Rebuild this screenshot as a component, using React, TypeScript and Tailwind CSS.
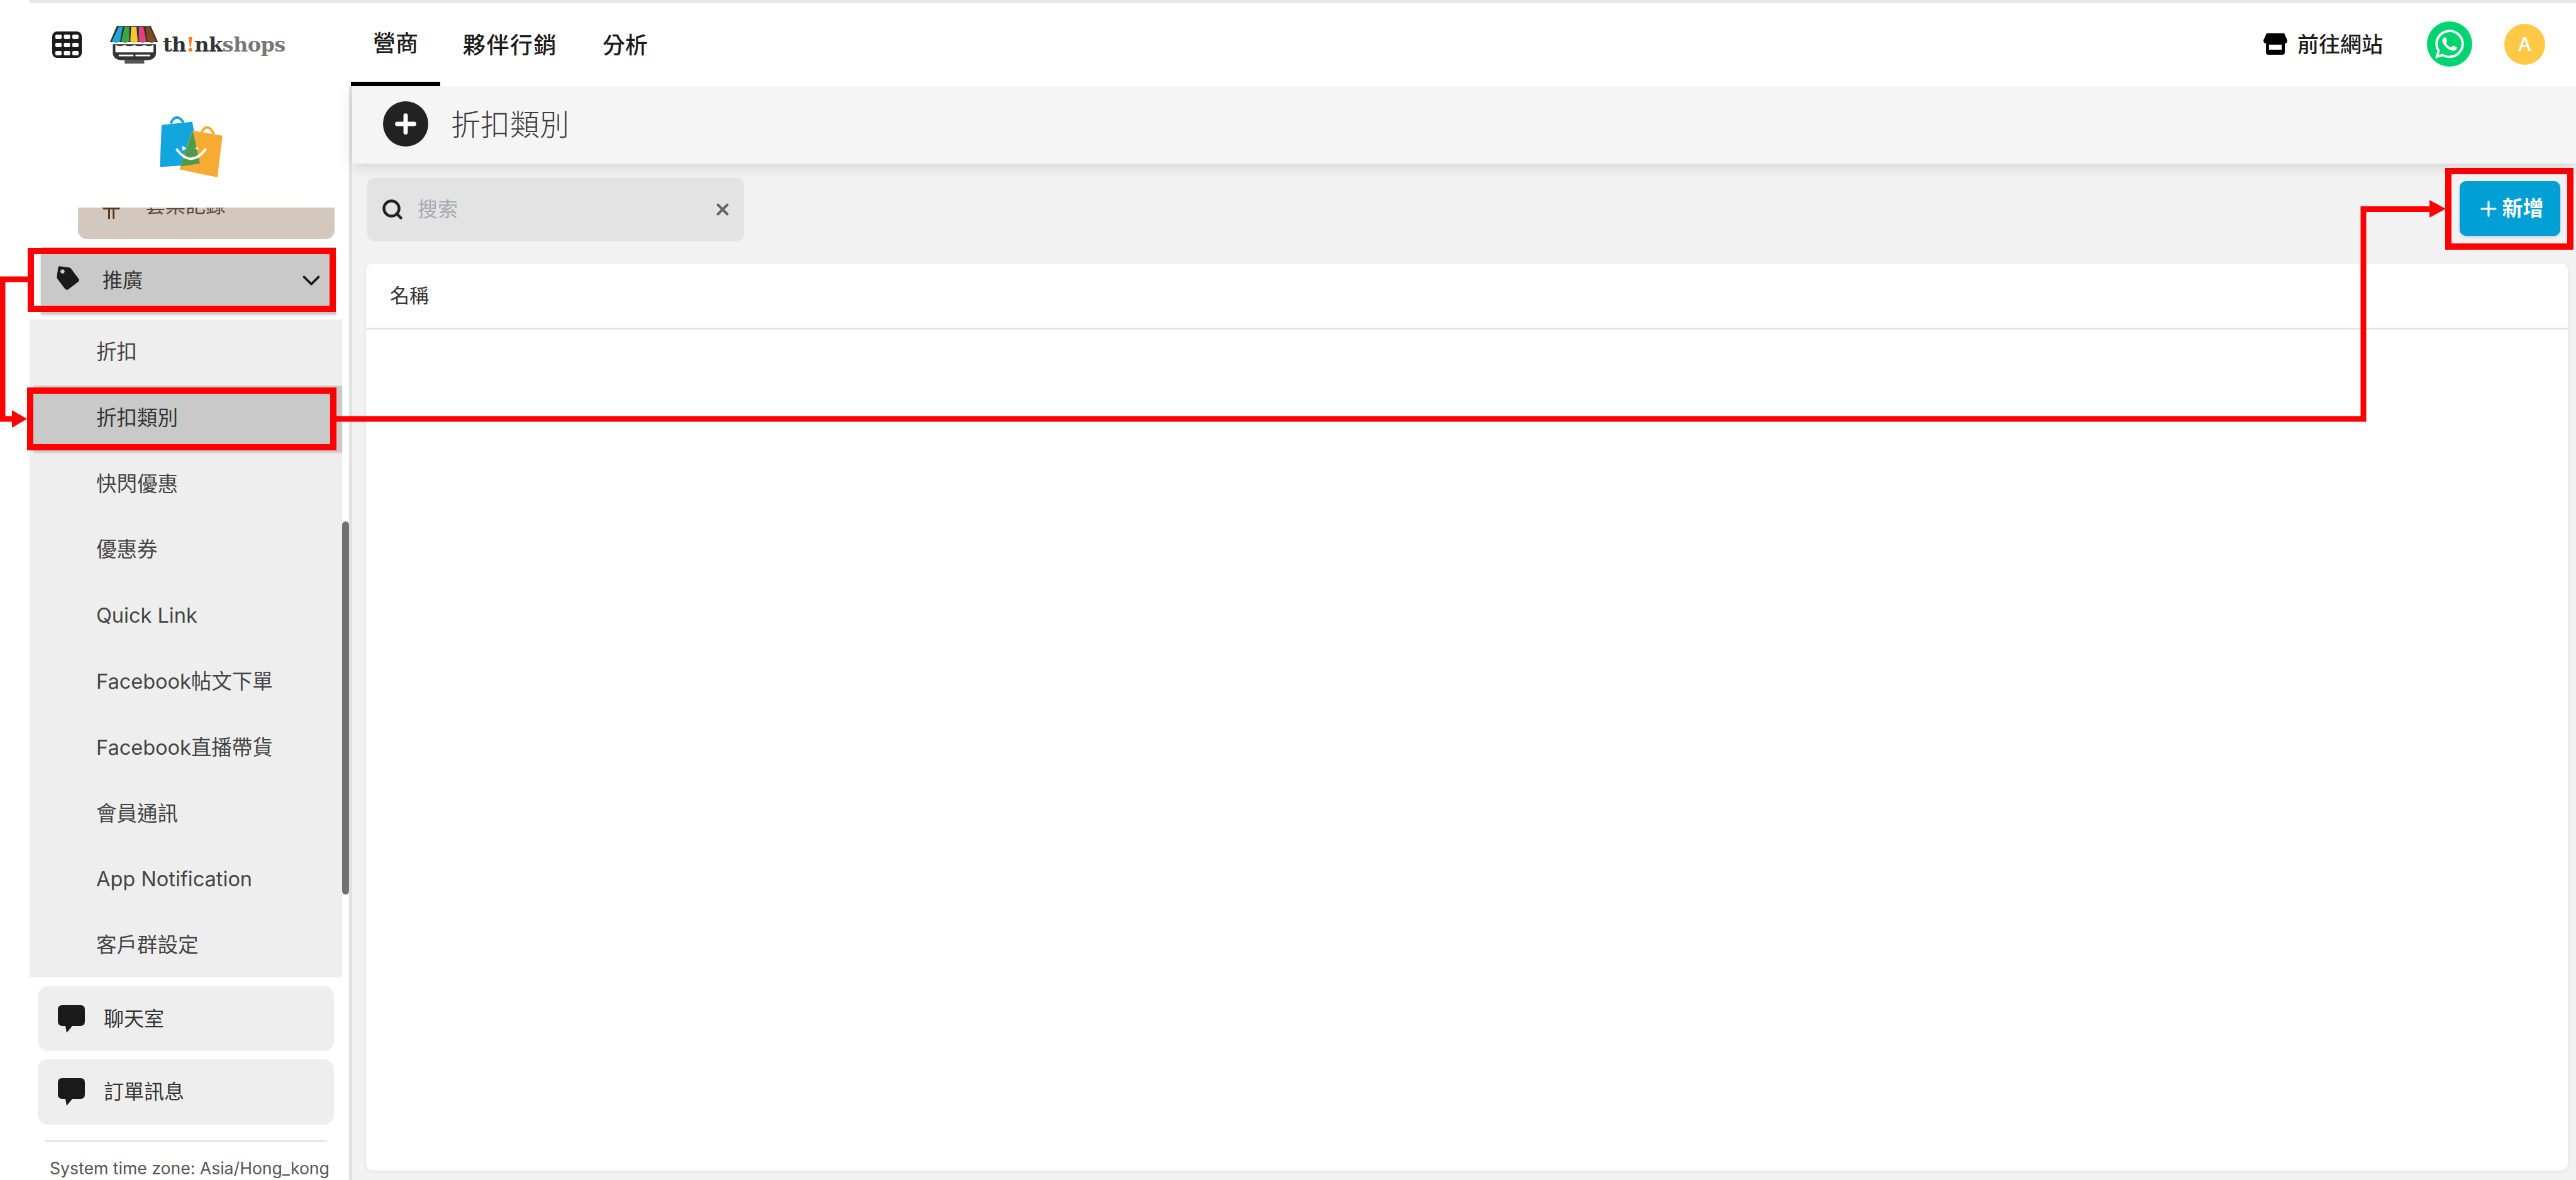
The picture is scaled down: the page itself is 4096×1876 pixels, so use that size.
import { FaWhatsapp, FaTag } from "react-icons/fa";
import { ChevronDown, Search, X, Plus } from "lucide-react";

const FONT = { fontFamily: 'Inter, "Noto Sans CJK TC", sans-serif' };

function GridIcon() {
  return (
    <svg width="47" height="42" viewBox="0 0 47 42" className="shrink-0">
      <rect width="47" height="42" rx="8" fill="#1a1a1a" />
      {[5, 18, 31].map((y) =>
        [5, 18.5, 32].map((x) => <rect key={`${x}-${y}`} x={x} y={y} width="10" height="7" rx="2" fill="#fff" />)
      )}
    </svg>
  );
}

function ShopLogo() {
  return (
    <svg width="80" height="64" viewBox="365 90 255 205" className="shrink-0">
      <path d="M405 97 H578 L615 180 H370 Z" fill="#333" />
      <path d="M415 102 H435 L422 175 Q400 190 380 175 Z" fill="#1ca6dc" />
      <path d="M445 102 H468 L468 175 Q448 190 428 175 Z" fill="#3aa648" />
      <path d="M478 102 H505 L512 175 Q492 190 474 175 Z" fill="#f8c630" />
      <path d="M518 102 H540 L556 175 Q536 190 517 175 Z" fill="#e83e80" />
      <path d="M552 102 H572 L606 175 Q582 190 562 175 Z" fill="#7d4c1f" />
      <path d="M385 190 H605 V240 Q600 270 560 272 H430 Q390 270 385 240 Z" fill="#333" />
      <path d="M398 194 Q420 205 445 195 Q470 205 495 195 Q520 205 545 195 Q570 205 592 194 V232 H398 Z" fill="#fff" />
      <rect x="415" y="243" width="75" height="9" rx="2" fill="#fff" />
      <rect x="500" y="243" width="75" height="9" rx="2" fill="#fff" />
      <rect x="445" y="272" width="100" height="17" fill="#555" />
    </svg>
  );
}

function BagsLogo() {
  return (
    <svg width="102" height="100" viewBox="140 75 330 325" className="shrink-0">
      <path d="M195 115 Q225 55 262 110" fill="none" stroke="#12a5de" strokeWidth="13" />
      <path d="M355 160 Q385 105 420 170" fill="none" stroke="#f7ab32" strokeWidth="13" />
      <path d="M152 125 L305 110 L345 322 L143 337 Z" fill="#12a5de" stroke="#12a5de" strokeWidth="6" strokeLinejoin="round" />
      <path d="M310 155 L460 180 L435 390 L245 350 Z" fill="#f7ab32" stroke="#f7ab32" strokeWidth="6" strokeLinejoin="round" />
      <path d="M310 152 L347 322 L247 337 Z" fill="#4f9a4c" />
      <path d="M255 230 L278 243 L257 256 Z" fill="#fff" />
      <path d="M320 243 L338 236 L338 252 Z" fill="#fff" />
      <path d="M228 250 Q300 345 375 250" fill="none" stroke="#fff" strokeWidth="13" strokeLinecap="round" />
    </svg>
  );
}

function ChatIcon() {
  return (
    <svg width="43" height="44" viewBox="0 0 43 44" className="shrink-0">
      <path d="M7 0 H36 Q43 0 43 7 V26 Q43 33 36 33 H23 L14 44 L12 33 H7 Q0 33 0 26 V7 Q0 0 7 0 Z" fill="#1a1a1a" />
    </svg>
  );
}

function StoreIcon() {
  return (
    <svg width="38" height="34" viewBox="0 0 38 34" className="shrink-0">
      <path d="M5 0 H33 L38 11 Q38 16 34 16 V30 Q34 34 30 34 H8 Q4 34 4 30 V16 Q0 16 0 11 Z" fill="#000" />
      <rect x="9" y="18" width="20" height="8" fill="#fff" />
    </svg>
  );
}

function CircledPlus() {
  return (
    <div className="flex h-[72px] w-[72px] shrink-0 items-center justify-center rounded-full bg-[#222222]">
      <Plus size={46} strokeWidth={3.6} color="#ffffff" />
    </div>
  );
}

const promos = ["折扣", "折扣類別", "快閃優惠", "優惠券", "Quick Link", "Facebook帖文下單", "Facebook直播帶貨", "會員通訊", "App Notification", "客戶群設定"];

function Annotations() {
  const red = "#ff0000";
  return (
    <svg width="4096" height="1876" viewBox="0 0 4096 1876" fill="none" className="pointer-events-none absolute left-0 top-0">
      <rect x="49" y="399" width="480" height="92" stroke={red} strokeWidth="10" />
      <rect x="48" y="621" width="482" height="90" stroke={red} strokeWidth="10" />
      <rect x="3893" y="272" width="194" height="120" stroke={red} strokeWidth="10" />
      <path d="M44 444 H4 V666 H22" stroke={red} strokeWidth="9" />
      <path d="M19 652 L43 666 L19 680 Z" fill={red} />
      <path d="M535 666 H3758 V332.5 H3866" stroke={red} strokeWidth="9" />
      <path d="M3863 318 L3889 332 L3863 346 Z" fill={red} />
    </svg>
  );
}

export default function App() {
  return (
    <div className="relative flex h-[1876px] w-[4096px] flex-col overflow-hidden bg-white text-[#333333]" style={FONT}>
      <header className="relative z-20 flex h-[137px] shrink-0 flex-col bg-white">
        <div className="ml-[47px] h-[5px] bg-[#e6e6e6]" />
        <div className="flex flex-1 items-stretch">
          <div className="flex w-[558px] shrink-0 items-center pl-[83px]">
            <GridIcon />
            <div className="ml-[43px]"><ShopLogo /></div>
            <span className="ml-[6px] text-[32px] font-bold leading-none tracking-[-0.6px] text-[#333333]" style={{ fontFamily: '"DejaVu Serif", serif' }}>
              th<span className="text-[#f47b20]">!</span>nk<span className="text-[#777777]">shops</span>
            </span>
          </div>
          <nav className="flex text-[36px] font-medium text-[#1c1c1c]">
            <div className="flex w-[142px] items-center justify-center border-b-[7px] border-black pt-[2px]">營商</div>
            <div className="ml-[36px] flex items-center pt-[2px] tracking-[1.5px]">夥伴行銷</div>
            <div className="ml-[72px] flex items-center pt-[2px]">分析</div>
          </nav>
          <div className="ml-auto flex items-center pb-[2px]">
            <StoreIcon />
            <span className="ml-[16px] text-[34px] font-medium text-[#1c1c1c]">前往網站</span>
            <div className="ml-[70px] flex h-[72px] w-[72px] items-center justify-center rounded-full bg-[#00d46f]">
              <FaWhatsapp size={52} color="#ffffff" />
            </div>
            <div className="ml-[51px] mr-[49px] flex h-[65px] w-[65px] items-center justify-center rounded-full bg-[#ffc845] text-[30px] font-medium text-white">A</div>
          </div>
        </div>
      </header>

      <div className="flex min-h-0 flex-1">
        <aside className="relative w-[560px] shrink-0 border-r-[5px] border-[#e2e2e2] bg-white">
          <div className="h-[193px] pl-[254px] pt-[47px]"><BagsLogo /></div>
          <div className="ml-[124px] flex h-[50px] w-[408px] overflow-hidden rounded-b-[14px] bg-[#d4c7bd] pl-[38px] text-[#5b4a3d]">
            <svg width="30" height="18" viewBox="0 0 30 18" className="shrink-0">
              <path d="M0 0 H30 L27 3 H20 V18 H17 V3 H13 V18 H10 V3 H3 Z" fill="#5b3a20" />
            </svg>
            <span className="-mt-[19px] ml-[39px] text-[32px] leading-[32px]">套票記錄</span>
          </div>
          <div className="ml-[65px] mt-[13px] flex h-[106px] w-[469px] items-center bg-[#c9c9c9] pl-[25px] pr-[16px] shadow-[0_2px_4px_rgba(0,0,0,0.2)]">
            <FaTag size={36} color="#1a1a1a" className="-mt-[6px] rotate-[8deg]" />
            <span className="ml-[37px] text-[32px]">推廣</span>
            <ChevronDown size={46} strokeWidth={2} color="#1a1a1a" className="ml-auto" />
          </div>
          <div className="ml-[47px] mt-[13px] h-[1046px] w-[497px] bg-[#eeeeee]">
            <div className="-mt-[4px] flex flex-col pt-0">
              {promos.map((p, i) => (
                <div key={p} className={i === 1 ? "ml-[6px] flex h-[104.8px] items-center bg-[#c9c9c9] pl-[100px] text-[32.5px] shadow-[0_2px_3px_rgba(0,0,0,0.15)]" : "flex h-[104.8px] items-center pl-[106px] text-[32.5px] text-[#444444]"}>
                  {p}
                </div>
              ))}
            </div>
          </div>
          <div className="absolute left-[544px] top-[692px] h-[593px] w-[11px] rounded-full bg-[#707070]" />
          <div className="ml-[60px] mt-[14px] flex h-[103px] w-[471px] items-center rounded-[16px] bg-[#eeeeee] pl-[32px]">
            <ChatIcon />
            <span className="ml-[30px] text-[32px]">聊天室</span>
          </div>
          <div className="ml-[60px] mt-[13px] flex h-[104px] w-[471px] items-center rounded-[16px] bg-[#eeeeee] pl-[32px]">
            <ChatIcon />
            <span className="ml-[30px] text-[32px]">訂單訊息</span>
          </div>
          <div className="ml-[71px] mt-[25px] h-[2px] w-[449px] bg-[#dddddd]" />
          <div className="ml-[79px] mt-[27px] whitespace-nowrap text-[26.6px] leading-[30px] text-[#555555]">System time zone: Asia/Hong_kong</div>
        </aside>

        <main className="flex min-w-0 flex-1 flex-col bg-[#f2f2f2]">
          <div className="relative z-10 flex h-[123px] shrink-0 items-center bg-[#f5f5f5] pb-[3px] pl-[49px] shadow-[0_5px_22px_rgba(0,0,0,0.13)]">
            <CircledPlus />
            <h1 className="ml-[36px] text-[47px] font-light leading-none text-[#3a3a3a]">折扣類別</h1>
          </div>
          <div className="flex shrink-0 items-start justify-between pl-[24px] pr-[25px] pt-[23px]">
            <div className="flex h-[100px] w-[599px] items-center rounded-[10px] bg-[#e3e3e3] pl-[22px] pr-[19px]">
              <Search size={36} strokeWidth={3} color="#222222" />
              <span className="ml-[22px] text-[32px] text-[#a8a8b4]">搜索</span>
              <X size={30} strokeWidth={3.2} color="#666666" className="ml-auto" />
            </div>
            <button className="mt-[5px] flex h-[87px] w-[160px] items-center justify-center rounded-[10px] bg-[#009fd6] text-[33px] font-bold text-white shadow-[0_2px_4px_rgba(0,0,0,0.15)]">
              <Plus size={38} strokeWidth={2} color="#ffffff" />
              <span className="ml-[3px]">新增</span>
            </button>
          </div>
          <section className="mb-[15px] ml-[22px] mr-[13px] mt-[36px] min-h-0 flex-1 rounded-[10px] bg-white shadow-[0_1px_6px_rgba(0,0,0,0.08)]">
            <div className="flex h-[105px] items-center border-b-[3px] border-[#e4e4e4] pl-[38px] text-[31px] text-[#333333]">名稱</div>
          </section>
        </main>
      </div>

      <Annotations />
    </div>
  );
}
